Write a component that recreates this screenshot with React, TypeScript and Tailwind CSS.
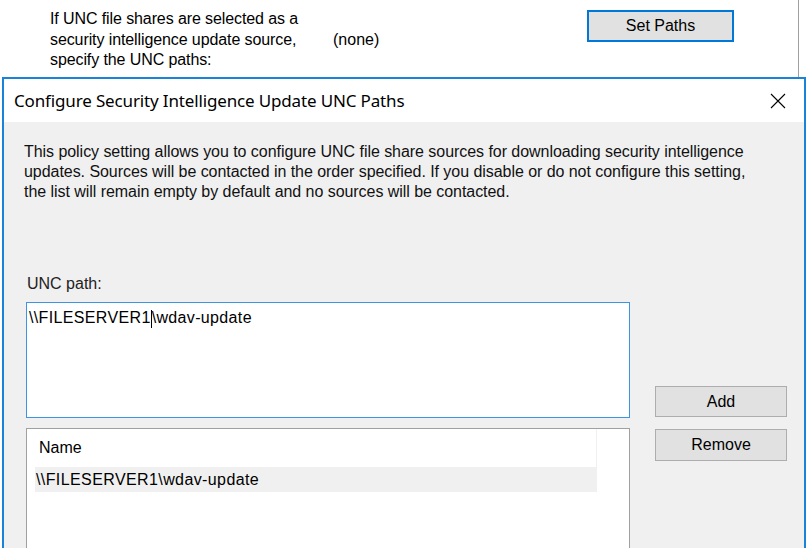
export default function App() {
  return (
    <div className="relative w-[808px] h-[548px] overflow-hidden bg-white font-['Liberation_Sans',Arial,sans-serif] text-[16px] text-black">
      {/* background policy window */}
      <div className="flex h-[77px] w-[799px] border-r border-[#a0a0a0]">
        <div className="pl-[50px] pt-[9px] w-[333px] leading-[20.5px] whitespace-nowrap tracking-[-0.1px]">
          If UNC file shares are selected as a<br />
          security intelligence update source,<br />
          specify the UNC paths:
        </div>
        <div className="pt-[29.5px] leading-[20.5px] w-[254px]">(none)</div>
        <div className="pt-[10px]">
          <button className="w-[147px] h-[32px] border-2 border-[#0078d7] bg-[#e1e1e1] text-[16px] leading-none">
            Set Paths
          </button>
        </div>
      </div>

      {/* dialog window */}
      <div className="absolute left-[2px] top-[77px] w-[804px] h-[500px] border-2 border-[#1883d7] bg-[#f0f0f0]">
        <div className="flex items-center justify-between h-[43px] bg-white pl-[10px] pr-[16px]">
          <span className="text-[17px] font-['Noto_Sans',sans-serif] tracking-[-0.15px]">
            Configure Security Intelligence Update UNC Paths
          </span>
          <svg width="16" height="16" viewBox="0 0 16 16" className="mr-[2px]">
            <path d="M1 1 L15 15 M15 1 L1 15" stroke="#000" strokeWidth="1.1" fill="none" />
          </svg>
        </div>

        <div className="pl-[20px] pt-[20px] leading-[20px] text-[#111] whitespace-nowrap tracking-[-0.05px]">
          This policy setting allows you to configure UNC file share sources for downloading security intelligence<br />
          updates. Sources will be contacted in the order specified. If you disable or do not configure this setting,<br />
          the list will remain empty by default and no sources will be contacted.
        </div>

        <div className="pl-[22px] pt-[72px] flex gap-[25px]">
          <div className="flex flex-col w-[604px]">
            <div className="leading-[20px] pl-[1px] text-[#222]">UNC path:</div>
            <div className="mt-[8px] h-[116px] border border-[#3d94e3] bg-white pl-[2px] pt-[5px] leading-[20px] whitespace-nowrap tracking-[0.35px]">
              \\FILESERVER1<span className="inline-block w-0 h-[18px] align-middle border-l border-black"></span>\wdav-update
            </div>
            <div className="mt-[10px] h-[130px] border border-[#a0a0a0] bg-white pl-[8px]">
              <div className="w-[562px] h-[38px] pl-[4px] flex items-center border-r border-[#f0f0f0]">
                Name
              </div>
              <div className="w-[562px] h-[25px] bg-[#f0f0f0] pl-[1px] flex items-center tracking-[0.4px] whitespace-nowrap">
                \\FILESERVER1\wdav-update
              </div>
            </div>
          </div>
          <div className="flex flex-col gap-[12px] pt-[112px]">
            <button className="w-[132px] h-[31px] border border-[#adadad] bg-[#e1e1e1] text-[16px] leading-none">Add</button>
            <button className="w-[132px] h-[32px] border border-[#adadad] bg-[#e1e1e1] text-[16px] leading-none">Remove</button>
          </div>
        </div>
      </div>
    </div>
  )
}
